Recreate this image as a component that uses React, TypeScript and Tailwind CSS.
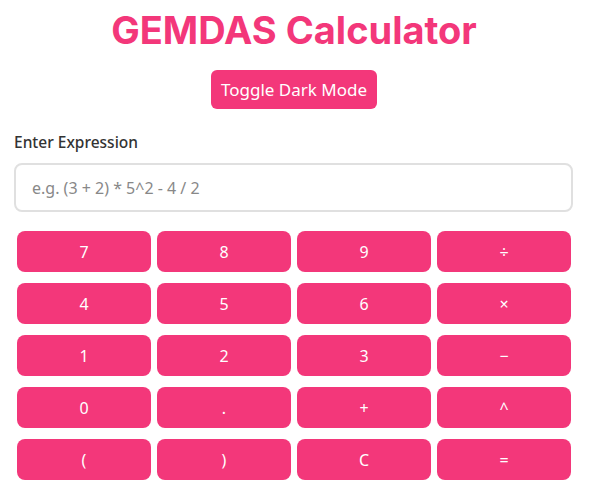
import { useState } from 'react'

const keys = [
  '7', '8', '9', '÷',
  '4', '5', '6', '×',
  '1', '2', '3', '−',
  '0', '.', '+', '^',
  '(', ')', 'C', '=',
]

export default function App() {
  const [expr, setExpr] = useState('')

  const press = (k: string) => {
    if (k === 'C') return setExpr('')
    if (k === '=') return
    setExpr(expr + k)
  }

  return (
    <div className="min-h-screen bg-white pt-[7px] font-['Noto_Sans',sans-serif]">
      <div className="w-[560px] ml-[14px]">
        {/* Title */}
        <h1 className="text-center text-[38px] leading-[46px] font-bold text-[#f3377a] font-['Inter',sans-serif]">
          GEMDAS Calculator
        </h1>

        {/* Toggle */}
        <div className="flex justify-center mt-[17px]">
          <button className="h-[39px] px-[10px] rounded-[6px] bg-[#f3377a] text-white text-[17px]">
            Toggle Dark Mode
          </button>
        </div>

        {/* Input */}
        <label className="block mt-[22px] text-[15.5px] font-medium text-[#333]">
          Enter Expression
        </label>
        <input
          value={expr}
          onChange={(e) => setExpr(e.target.value)}
          placeholder="e.g. (3 + 2) * 5^2 - 4 / 2"
          className="mt-[9px] w-[559px] h-[49px] px-[16px] rounded-[8px] border-2 border-[#e0e0e0] text-[16px] text-[#333] placeholder:text-[#888] outline-none"
        />

        {/* Keypad */}
        <div className="grid grid-cols-4 gap-x-[6px] gap-y-[11px] px-[3px] mt-[19px]">
          {keys.map((k) => (
            <button
              key={k}
              onClick={() => press(k)}
              className="h-[41px] rounded-[8px] bg-[#f3377a] text-white text-[16px]"
            >
              {k}
            </button>
          ))}
        </div>
      </div>
    </div>
  )
}
